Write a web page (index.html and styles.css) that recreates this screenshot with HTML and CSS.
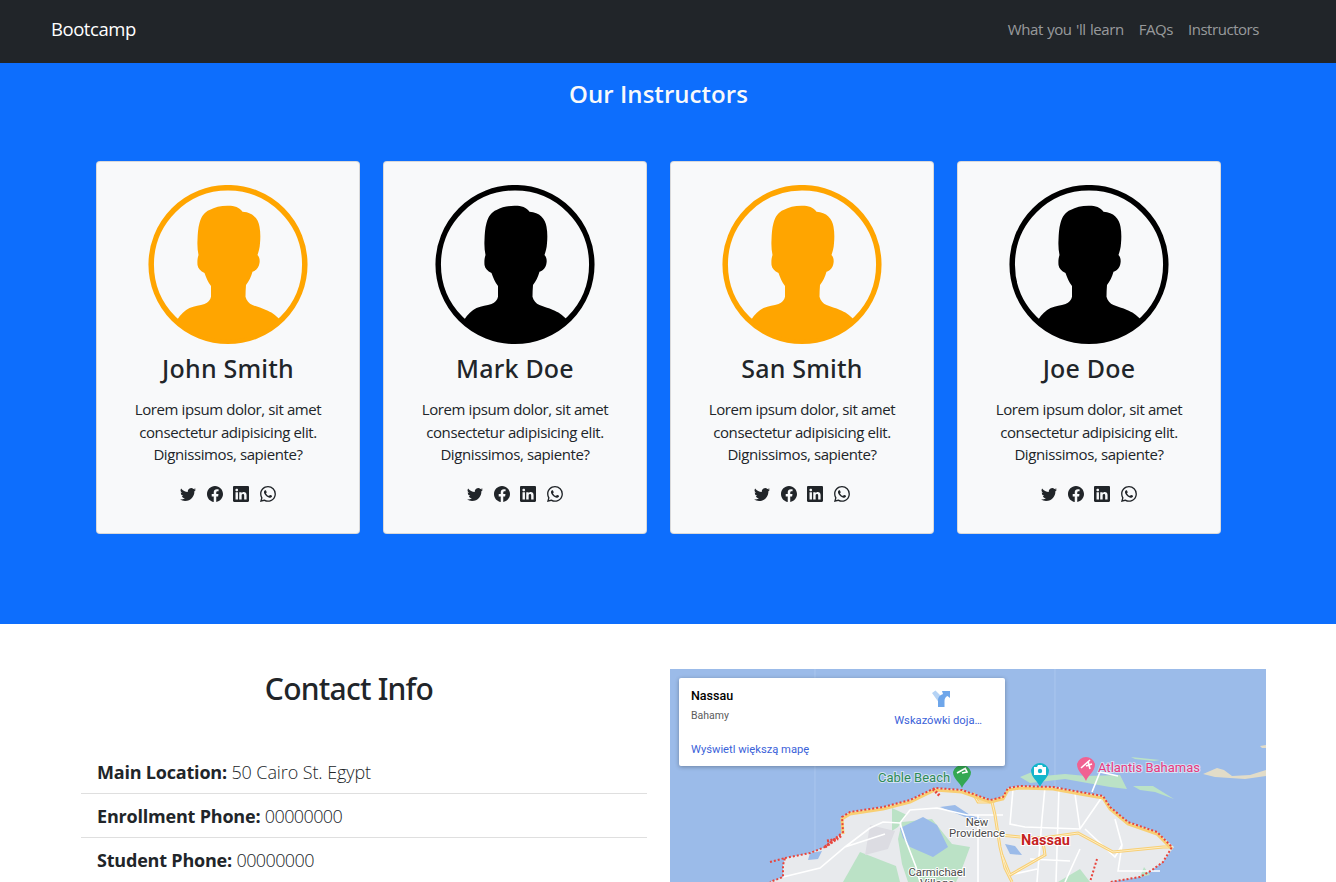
FILE: index.html
```html
<!DOCTYPE html>
<html lang="en">
<head>
<meta charset="utf-8">
<title>Bootcamp</title>
<link rel="stylesheet" href="styles.css">
</head>
<body>
<svg class="sprite" width="0" height="0" aria-hidden="true">
  <defs>
    <symbol id="person" viewBox="0 0 160 160">
      <circle cx="80" cy="79.5" r="76.8" fill="none" stroke="currentColor" stroke-width="5.5"/>
      <path fill="currentColor" d="M79.500 20.700C85.500 20.500 91.500 22 94.500 26.700C104.500 27 110.500 34 111.500 41.700C112.500 47 112.500 53 112 58.300C111.800 63 110.500 67 109.500 70C111.500 72 112 75 111.500 78C111 82 108.500 85.500 104.500 86.700C103 92 101 96 98 100C97.700 104 97.500 108 97.500 111.700C98.500 115.500 101 118.500 104.500 120C109 121.700 113.500 123 118 125C123 127 127.500 129.500 132 135A77 77 0 0 1 29 135C32.500 129 37 125.500 41.500 123C46.500 121 52 120.500 56.500 119C60 117.500 62.500 115 63 111.700L63 101C60 97 58 92.500 56.500 88C52.500 86 50 83.500 49.500 80C49.200 76 49.500 73 50.500 70C49.500 65 49.200 60 49.500 55C49.700 49 50 43 51.500 38C53.500 31 56.500 27 61.500 25C66.500 22 72.500 20.800 79.500 20.700Z"/>
    </symbol>
    <symbol id="i-twitter" viewBox="0 0 16 16"><path fill="currentColor" d="M5.026 15c6.038 0 9.341-5.003 9.341-9.334 0-.14 0-.282-.006-.422A6.685 6.685 0 0 0 16 3.542a6.658 6.658 0 0 1-1.889.518 3.301 3.301 0 0 0 1.447-1.817 6.533 6.533 0 0 1-2.087.793A3.286 3.286 0 0 0 7.875 6.03a9.325 9.325 0 0 1-6.767-3.429 3.289 3.289 0 0 0 1.018 4.382A3.323 3.323 0 0 1 .64 6.575v.045a3.288 3.288 0 0 0 2.632 3.218 3.203 3.203 0 0 1-.865.115 3.23 3.23 0 0 1-.614-.057 3.283 3.283 0 0 0 3.067 2.277A6.588 6.588 0 0 1 .78 13.58a6.32 6.32 0 0 1-.78-.045A9.344 9.344 0 0 0 5.026 15z"/></symbol>
    <symbol id="i-facebook" viewBox="0 0 16 16"><path fill="currentColor" d="M16 8.049c0-4.446-3.582-8.05-8-8.05C3.58 0-.002 3.603-.002 8.05c0 4.017 2.926 7.347 6.75 7.951v-5.625h-2.03V8.05H6.75V6.275c0-2.017 1.195-3.131 3.022-3.131.876 0 1.791.157 1.791.157v1.98h-1.009c-.993 0-1.303.621-1.303 1.258v1.51h2.218l-.354 2.326H9.25V16c3.824-.604 6.75-3.934 6.75-7.951z"/></symbol>
    <symbol id="i-linkedin" viewBox="0 0 16 16"><path fill="currentColor" d="M0 1.146C0 .513.526 0 1.175 0h13.65C15.474 0 16 .513 16 1.146v13.708c0 .633-.526 1.146-1.175 1.146H1.175C.526 16 0 15.487 0 14.854V1.146zm4.943 12.248V6.169H2.542v7.225h2.401zm-1.2-8.212c.837 0 1.358-.554 1.358-1.248-.015-.709-.52-1.248-1.342-1.248-.822 0-1.359.54-1.359 1.248 0 .694.521 1.248 1.327 1.248h.016zm4.908 8.212V9.359c0-.216.016-.432.08-.586.173-.431.568-.878 1.232-.878.869 0 1.216.662 1.216 1.634v3.865h2.401V9.25c0-2.22-1.184-3.252-2.764-3.252-1.274 0-1.845.7-2.165 1.193v.025h-.016a5.54 5.54 0 0 1 .016-.025V6.169h-2.4c.03.678 0 7.225 0 7.225h2.4z"/></symbol>
    <symbol id="i-whatsapp" viewBox="0 0 16 16"><path fill="currentColor" d="M13.601 2.326A7.854 7.854 0 0 0 7.994 0C3.627 0 .068 3.558.064 7.926c0 1.399.366 2.76 1.057 3.965L0 16l4.204-1.102a7.933 7.933 0 0 0 3.79.965h.004c4.368 0 7.926-3.558 7.93-7.93A7.898 7.898 0 0 0 13.6 2.326zM7.994 14.521a6.573 6.573 0 0 1-3.356-.92l-.24-.144-2.494.654.666-2.433-.156-.251a6.56 6.56 0 0 1-1.007-3.505c0-3.626 2.957-6.584 6.591-6.584a6.56 6.56 0 0 1 4.66 1.931 6.557 6.557 0 0 1 1.928 4.66c-.004 3.639-2.961 6.592-6.592 6.592zm3.615-4.934c-.197-.099-1.17-.578-1.353-.646-.182-.065-.315-.099-.445.099-.133.197-.513.646-.627.775-.114.133-.232.148-.43.05-.197-.1-.836-.308-1.592-.985-.59-.525-.985-1.175-1.103-1.372-.114-.198-.011-.304.088-.403.087-.088.197-.232.296-.346.1-.114.133-.198.198-.33.065-.134.034-.248-.015-.347-.05-.099-.445-1.076-.612-1.47-.16-.389-.323-.335-.445-.34-.114-.007-.247-.007-.38-.007a.729.729 0 0 0-.529.247c-.182.198-.691.677-.691 1.654 0 .977.71 1.916.81 2.049.098.133 1.394 2.132 3.383 2.992.47.205.84.326 1.129.418.475.152.904.129 1.246.08.38-.058 1.171-.48 1.338-.943.164-.464.164-.86.114-.943-.049-.084-.182-.133-.38-.232z"/></symbol>
  </defs>
</svg>

<nav class="navbar">
  <a class="brand" href="#">Bootcamp</a>
  <ul class="nav-links">
    <li><a href="#learn">What you 'll learn</a></li>
    <li><a href="#faqs">FAQs</a></li>
    <li><a href="#instructors">Instructors</a></li>
  </ul>
</nav>

<section class="instructors" id="instructors">
  <h2 class="section-title">Our Instructors</h2>
  <div class="cards">
    <article class="card">
      <svg class="avatar avatar-orange"><use href="#person"/></svg>
      <h3 class="card-name">John Smith</h3>
      <p class="card-text">Lorem ipsum dolor, sit amet consectetur adipisicing elit. Dignissimos, sapiente?</p>
      <div class="socials">
        <svg class="icon"><use href="#i-twitter"/></svg><svg class="icon"><use href="#i-facebook"/></svg><svg class="icon"><use href="#i-linkedin"/></svg><svg class="icon"><use href="#i-whatsapp"/></svg>
      </div>
    </article>
    <article class="card">
      <svg class="avatar avatar-black"><use href="#person"/></svg>
      <h3 class="card-name">Mark Doe</h3>
      <p class="card-text">Lorem ipsum dolor, sit amet consectetur adipisicing elit. Dignissimos, sapiente?</p>
      <div class="socials">
        <svg class="icon"><use href="#i-twitter"/></svg><svg class="icon"><use href="#i-facebook"/></svg><svg class="icon"><use href="#i-linkedin"/></svg><svg class="icon"><use href="#i-whatsapp"/></svg>
      </div>
    </article>
    <article class="card">
      <svg class="avatar avatar-orange"><use href="#person"/></svg>
      <h3 class="card-name">San Smith</h3>
      <p class="card-text">Lorem ipsum dolor, sit amet consectetur adipisicing elit. Dignissimos, sapiente?</p>
      <div class="socials">
        <svg class="icon"><use href="#i-twitter"/></svg><svg class="icon"><use href="#i-facebook"/></svg><svg class="icon"><use href="#i-linkedin"/></svg><svg class="icon"><use href="#i-whatsapp"/></svg>
      </div>
    </article>
    <article class="card">
      <svg class="avatar avatar-black"><use href="#person"/></svg>
      <h3 class="card-name">Joe Doe</h3>
      <p class="card-text">Lorem ipsum dolor, sit amet consectetur adipisicing elit. Dignissimos, sapiente?</p>
      <div class="socials">
        <svg class="icon"><use href="#i-twitter"/></svg><svg class="icon"><use href="#i-facebook"/></svg><svg class="icon"><use href="#i-linkedin"/></svg><svg class="icon"><use href="#i-whatsapp"/></svg>
      </div>
    </article>
  </div>
</section>

<section class="contact" id="contact">
  <div class="contact-info">
    <h2 class="contact-title">Contact Info</h2>
    <ul class="contact-list">
      <li><strong>Main Location:</strong> <span class="value">50 Cairo St. Egypt</span></li>
      <li><strong>Enrollment Phone:</strong> <span class="value value-num">00000000</span></li>
      <li><strong>Student Phone:</strong> <span class="value value-num">00000000</span></li>
    </ul>
  </div>
  <div class="map">
    <svg class="map-canvas" viewBox="0 0 596 213" width="596" height="213">
      <rect class="m-sea" width="596" height="213"/>
      <path class="m-seam" d="M145 0V213M385 0V120"/>
      <!-- islands -->
      <path class="m-park" d="M350 108L362 103L373 107L395 105L416 107L450 106L457 120L440 118L423 115L395 110L360 114Z"/>
      <path class="m-park" d="M463 117L483 117L504 130L485 123L470 121Z"/>
      <path class="m-park" d="M461 88L490 91L484 92L465 90Z"/>
      <path class="m-beige" d="M533 105L547 99L554 101L562 107L580 106L596 101V107L575 110L560 109L545 108Z"/>
      <path class="m-beige" d="M590 77L596 76V79L592 79Z"/>
      <!-- land -->
      <path class="m-land" d="M100 213L113 208L113 196L115 189L140 184L155 178L173 163L172 148L180 143L213 138L240 131L265 119L292 121L320 131L333 128L338 119L350 117L383 118L410 123L433 127L440 138L458 153L487 163L504 178L493 193L482 201L470 208L440 213Z"/>
      <!-- parks -->
      <path class="m-park" d="M222 139L237 146L228 158L222 162Z"/>
      <path class="m-park" d="M232 153L262 150L282 175L300 178L290 205L286 213L238 213L232 195L228 170Z"/>
      <path class="m-park" d="M173 213L190 183L226 197L230 213Z"/>
      <path class="m-park" d="M388 213L410 200L420 213Z"/>
      <path class="m-park" d="M470 208L474 198L480 206Z"/>
      <path class="m-gray" d="M200 156L225 162L218 180L195 186Z"/>
      <!-- water -->
      <path class="m-water" d="M230 159L253 148L267 156L278 178L263 188L240 178L233 169Z"/>
      <path class="m-water" d="M270 138L285 136L300 146L318 152L300 150Z"/>
      <path class="m-water" d="M335 175L345 177L352 186L340 185Z"/>
      <path class="m-water" d="M140 184L152 182L148 190L138 191Z"/>
      <!-- roads -->
      <path class="m-road" d="M113 208L150 199L175 178L200 159L213 153L230 154L240 141L267 139L297 146L333 146M230 154L236 172L246 198L250 213M175 178L215 165M308 146V213M343 120L340 155L355 158L410 160L432 128M375 118L372 150L367 213M389 118L386 213M410 160L405 125M415 160L445 188L452 176L445 150M452 176L448 202L490 202M410 180L395 213M360 190L400 192M340 206L367 200"/>
      <path class="m-road" d="M422 123L430 103L448 107"/>
      <path class="m-highway" d="M303 124L308 133L322 133L333 128M322 133L325 146L330 178L335 199L342 213M330 166L350 168L373 169L408 164L443 183L493 178L502 178M332 186L340 206L375 186L373 173"/>
      <path class="m-highway-core" d="M303 124L308 133L322 133L333 128M322 133L325 146L330 178L335 199L342 213M330 166L350 168L373 169L408 164L443 183L493 178L502 178M332 186L340 206L375 186L373 173"/>
      <path class="m-coast-y" d="M173 163L172 148L180 143L213 138L240 131L265 119L292 121L320 131L333 128L338 119L350 117L383 118L410 123L433 127L440 138L458 153L487 163L502 178"/>
      <path class="m-border" d="M100 193L115 189L113 196L113 208L100 213M115 189L140 184L155 178L173 163L172 148L180 143L213 138L240 131L265 119L292 121L320 131L333 128L338 119L350 117L383 118L410 123L433 127L440 138L458 153L487 163L502 178L493 193L482 201L470 208L440 213M427 190L420 213"/>
      <path class="m-border-thick" d="M155 178L172 166M157 172L168 170M263 120L270 127"/>
      <!-- pins -->
      <path class="m-pin-green" d="M292 119C290 113 283 110 283 103A9.300 9.300 0 0 1 301 103C301 110 294 113 292 119Z"/>
      <path class="m-pin-icon" d="M287 104L296 99M292 104L297 103L295 99"/>
      <path class="m-pin-teal" d="M370 118C368 112 361 109 361 101A9.300 9.300 0 0 1 379 101C379 109 372 112 370 118Z"/>
      <path class="m-pin-white" d="M364 98H367L368 96H372L373 98H376V106H364Z"/>
      <circle class="m-pin-teal" cx="370" cy="102" r="2.200"/>
      <path class="m-pin-pink" d="M416 112C414 106 407 103 407 95A9.300 9.300 0 0 1 425 95C425 103 418 106 416 112Z"/>
      <path class="m-pin-icon" d="M411 99L420 91M416 97L422 95M418 92L420 100"/>
      <!-- labels -->
      <text class="m-label m-label-green" x="208" y="113">Cable Beach</text>
      <text class="m-label m-label-pink" x="428" y="103">Atlantis Bahamas</text>
      <text class="m-city" x="351" y="176">Nassau</text>
      <text class="m-small" x="307" y="157">New</text>
      <text class="m-small" x="307" y="168">Providence</text>
      <text class="m-small" x="267" y="207">Carmichael</text>
      <text class="m-small" x="267" y="218">Village</text>
    </svg>
    <div class="map-card">
      <div class="map-place">
        <div class="map-name">Nassau</div>
        <div class="map-region">Bahamy</div>
        <a class="map-link map-larger" href="#">Wyświetl większą mapę</a>
      </div>
      <a class="map-directions" href="#">
        <svg class="map-dir-icon" viewBox="0 0 18 18" width="18" height="18">
          <path class="dir-light" d="M0 3L3.500 0.500L11 8C9 9 7 10 6.500 12Z"/>
          <path class="dir-main" d="M6 17V10C6 7 8 5 11 4L10 1H18V8L15.500 6C13.500 7 12.500 8.500 12.500 11V17Z"/>
        </svg>
        <span class="map-link">Wskazówki doja…</span>
      </a>
    </div>
  </div>
</section>
</body>
</html>
```

FILE: styles.css
```css
html, body {
  margin: 0;
  padding: 0;
  height: 882px;
  overflow: hidden;
}

body {
  font-family: "Open Sans", "Liberation Sans", sans-serif;
  font-size: 16px;
  line-height: 1.5;
  color: #212529;
  background: #fff;
}

.sprite {
  position: absolute;
}

.navbar {
  display: flex;
  align-items: center;
  justify-content: space-between;
  box-sizing: border-box;
  height: 63px;
  padding: 0 77px 6px 51px;
  background: #212529;
}

.brand {
  font-size: 18.500px;
  letter-spacing: -0.45px;
  color: #fff;
  text-decoration: none;
}

.nav-links {
  display: flex;
  gap: 15px;
  margin: 0;
  padding: 0;
  list-style: none;
}

.nav-links a {
  font-size: 15px;
  letter-spacing: -0.45px;
  word-spacing: 1px;
  color: rgba(255, 255, 255, 0.55);
  text-decoration: none;
}

.instructors {
  height: 561px;
  box-sizing: border-box;
  background: #0d6efd;
  padding: 14px 0 0 96px;
}

.section-title {
  width: 1125px;
  margin: 0 0 50px;
  font-size: 24px;
  line-height: 34px;
  font-weight: 600;
  text-align: center;
  color: #f8f9fa;
  letter-spacing: 0.05px;
}

.cards {
  display: flex;
  gap: 23px;
}

.card {
  display: flex;
  flex-direction: column;
  align-items: center;
  box-sizing: border-box;
  width: 264px;
  height: 373px;
  padding: 23px 16px 0;
  background: #f8f9fa;
  border: 1px solid rgba(0, 0, 0, 0.125);
  border-radius: 4px;
}

.avatar {
  width: 160px;
  height: 160px;
  flex: none;
}

.avatar-orange {
  color: #ffa500;
}

.avatar-black {
  color: #000;
}

.card-name {
  margin: 6px 0 13px;
  font-family: "Noto Sans", "Open Sans", sans-serif;
  font-size: 25px;
  line-height: 34px;
  font-weight: 500;
  letter-spacing: 0.2px;
}

.card-text {
  margin: 0 0 20px;
  font-size: 15px;
  line-height: 22.500px;
  font-weight: 400;
  letter-spacing: -0.4px;
  text-align: center;
}

.socials {
  display: flex;
  gap: 10.500px;
}

.icon {
  display: block;
  width: 16px;
  height: 16px;
  color: #212529;
}

.contact {
  display: flex;
  gap: 23px;
  padding: 45px 0 0 81px;
}

.contact-info {
  width: 566px;
  flex: none;
}

.contact-title {
  width: 536px;
  margin: 0 0 41px;
  font-family: "Noto Sans", "Open Sans", sans-serif;
  font-size: 30px;
  line-height: 40px;
  font-weight: 500;
  text-align: center;
  letter-spacing: -0.75px;
}

.contact-list {
  margin: 0;
  padding: 0;
  list-style: none;
}

.contact-list li {
  padding: 9px 16px 7px;
  font-size: 18px;
  line-height: 27px;
  letter-spacing: -0.2px;
  border-bottom: 1px solid rgba(0, 0, 0, 0.125);
}

.contact-list li:last-child {
  border-bottom: 0;
}

.contact-list strong {
  font-weight: 700;
}

.value {
  font-weight: 300;
  letter-spacing: -0.1px;
}

.value-num {
  letter-spacing: -0.6px;
}

.map {
  position: relative;
  width: 596px;
  height: 213px;
  flex: none;
}

.map-canvas {
  display: block;
}

.m-sea { fill: #9bbbe9; }
.m-seam { fill: none; stroke: #aac6ee; stroke-width: 1; }
.m-land { fill: #e8eaed; }
.m-park { fill: #bbe2c6; }
.m-beige { fill: #e2dcc8; }
.m-gray { fill: #dcdce2; }
.m-water { fill: #9bbbe9; }
.m-road { fill: none; stroke: #fff; stroke-width: 1.600; }
.m-highway { fill: none; stroke: #f8cf74; stroke-width: 3; }
.m-highway-core { fill: none; stroke: #fdeec5; stroke-width: 1; }
.m-coast-y { fill: none; stroke: #f8cf74; stroke-width: 3; transform: translateY(2px); }
.m-border { fill: none; stroke: #e8453c; stroke-width: 2; stroke-dasharray: 2 2; }
.m-border-thick { fill: none; stroke: #e8453c; stroke-width: 3; stroke-dasharray: 2 1.500; }
.m-pin-green { fill: #34a853; }
.m-pin-teal { fill: #12b5cb; }
.m-pin-pink { fill: #f06292; }
.m-pin-white { fill: #fff; }
.m-pin-icon { fill: none; stroke: #fff; stroke-width: 1.600; }

.m-label {
  font-family: Roboto, "Liberation Sans", sans-serif;
  font-size: 13px;
  paint-order: stroke;
  stroke: rgba(255, 255, 255, 0.55);
  stroke-width: 2px;
}

.m-label-green { fill: #2e8b57; }
.m-label-pink { fill: #e8397e; }

.m-city {
  font-family: Roboto, "Liberation Sans", sans-serif;
  font-size: 14.500px;
  font-weight: 700;
  fill: #c5221f;
  paint-order: stroke;
  stroke: #fff;
  stroke-width: 2px;
}

.m-small {
  font-family: Roboto, "Liberation Sans", sans-serif;
  font-size: 11.300px;
  fill: #4a4a4a;
  text-anchor: middle;
  paint-order: stroke;
  stroke: #fff;
  stroke-width: 2px;
}

.map-card {
  position: absolute;
  top: 9px;
  left: 9px;
  box-sizing: border-box;
  display: flex;
  justify-content: space-between;
  width: 326px;
  height: 88px;
  padding: 10px 23px 0 12px;
  background: #fff;
  border-radius: 2px;
  box-shadow: 0 1px 4px rgba(0, 0, 0, 0.3);
  font-family: Roboto, "Liberation Sans", sans-serif;
}

.map-place {
  display: flex;
  flex-direction: column;
}

.map-name {
  font-size: 12.500px;
  line-height: 16px;
  font-weight: 500;
  color: #000;
}

.map-region {
  margin-top: 5px;
  font-size: 10.500px;
  line-height: 14px;
  color: #5b5b5b;
}

.map-larger {
  margin-top: 20px;
}

.map-link {
  font-size: 11.200px;
  line-height: 14px;
  color: #3b62d9;
  text-decoration: none;
}

.map-directions {
  display: flex;
  flex-direction: column;
  align-items: center;
  padding-top: 2px;
  text-decoration: none;
}

.map-dir-icon {
  margin-bottom: 6px;
  transform: translateX(3px);
}

.dir-light { fill: #b5d3f5; }
.dir-main { fill: #6ea6ea; }
```
